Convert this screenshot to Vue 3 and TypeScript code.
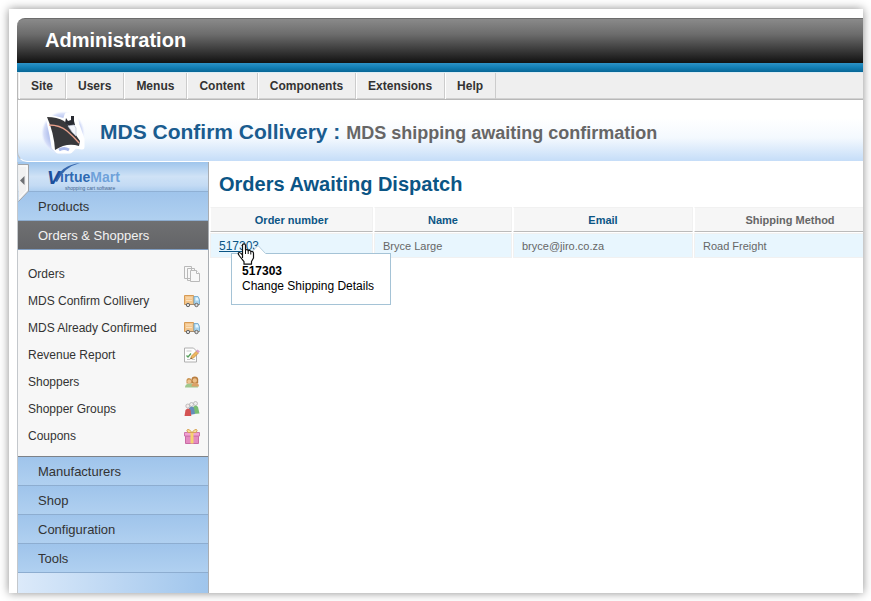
<script setup lang="ts">
interface ShopLink {
  label: string
  icon: 'pages' | 'truck' | 'report' | 'people' | 'groups' | 'gift'
}

interface Order {
  number: string
  name: string
  email: string
  method: string
}

const menu: string[] = ['Site', 'Users', 'Menus', 'Content', 'Components', 'Extensions', 'Help']

const links: ShopLink[] = [
  { label: 'Orders', icon: 'pages' },
  { label: 'MDS Confirm Collivery', icon: 'truck' },
  { label: 'MDS Already Confirmed', icon: 'truck' },
  { label: 'Revenue Report', icon: 'report' },
  { label: 'Shoppers', icon: 'people' },
  { label: 'Shopper Groups', icon: 'groups' },
  { label: 'Coupons', icon: 'gift' },
]

const sections: string[] = ['Manufacturers', 'Shop', 'Configuration', 'Tools']

const orders: Order[] = [
  { number: '517303', name: 'Bryce Large', email: 'bryce@jiro.co.za', method: 'Road Freight' },
]
</script>

<template>
  <div class="page">
    <div class="frame">
      <header class="brand">Administration</header>
      <div class="stripe"></div>
      <nav class="menu">
        <a v-for="item in menu" :key="item" href="#">{{ item }}</a>
      </nav>

      <div class="title-wrap">
        <div class="title">
          <svg class="ship" viewBox="0 0 48 48" width="48" height="48" aria-hidden="true">
            <defs>
              <radialGradient id="globe">
                <stop offset="0" stop-color="#93a5e0" />
                <stop offset="0.7" stop-color="#bcc8f0" />
                <stop offset="0.88" stop-color="#d6def8" />
                <stop offset="1" stop-color="#eef3ff" stop-opacity="0" />
              </radialGradient>
            </defs>
            <circle cx="23" cy="24" r="22" fill="url(#globe)" />
            <path d="M8 8 L25 12 L27 6 L35 6 L37 16 L42 30 L42 38 L35 37 L30 42 L18 42 L14 38 L12 26Z" fill="#fff" stroke="#fff" stroke-width="5" stroke-linejoin="round" />
            <path d="M19 41q5-3 10 0" stroke="#a9b8ea" stroke-width="3" fill="none" />
            <path d="M7 8 Q17 8 24 12 Q32 20 40 32 L39 37 Q27 33 15 41 Q14 24 7 8Z" fill="#38383b" />
            <path d="M26 9 28 12 31 11 31 7 34 7 34 12 35 16 29 17 25 14Z" fill="#292b32" />
            <path d="M28 17 34 16 36 19 36 27 32 23Z" fill="#f4f6fc" stroke="#b8bfce" stroke-width=".7" />
            <path d="M9 16 Q20 16 27 22 T39 34" stroke="#e8a08c" stroke-width="1.3" fill="none" />
          </svg>
          <h1>MDS Confirm Collivery : <small>MDS shipping awaiting confirmation</small></h1>
        </div>
      </div>

      <div class="body">
        <aside class="side">
          <button class="handle" type="button" aria-label="Toggle menu">
            <svg viewBox="0 0 11 38" width="11" height="38">
              <path d="M0 .5H10.500V27L.5 37.500" fill="#f1f1f1" stroke="#9fa3a8" />
              <path d="M1.500 2H9V26L1.500 34" fill="none" stroke="#fff" />
              <path d="M6.500 12 2 16.500 6.500 21Z" fill="#6e7074" />
            </svg>
          </button>
          <div class="logo">
            <svg viewBox="0 0 80 29" width="80" height="29" role="img" aria-label="VirtueMart shopping cart software">
              <path d="M9 19 Q15 3 34 1 Q18 5 11 20Z" fill="#3565ac" />
              <text x="1" y="22" class="logo-v">V</text>
              <text x="14" y="20" class="logo-word">irtue<tspan class="logo-mart">Mart</tspan></text>
              <text x="19" y="28" class="logo-tag">shopping cart software</text>
            </svg>
          </div>
          <a class="section" href="#">Products</a>
          <a class="section active" href="#">Orders &amp; Shoppers</a>
          <ul class="links">
            <li v-for="link in links" :key="link.label">
              <a href="#">
                <span>{{ link.label }}</span>
                <svg viewBox="0 0 16 16" width="16" height="16" aria-hidden="true">
                  <g v-if="link.icon === 'pages'" fill="#f8f8f8" stroke="#b9b9b9">
                    <path d="M.5.5h7v12h-7zM3.500 2.500h7v12h-7z" />
                    <path d="M6.500 4.500h6l3 3v8h-9z" />
                    <path d="M12.500 4.500v3h3" fill="#fff" />
                  </g>
                  <g v-else-if="link.icon === 'truck'">
                    <path d="M.5 2.500h9v9h-9z" fill="#f3c68d" stroke="#d79b55" />
                    <path d="M2 5h6M2 7.500h6" stroke="#fbe1bd" />
                    <path d="M10 3.500h4l1.500 3v5h-5.500z" fill="#a9d4ee" stroke="#7fb1d2" />
                    <path d="M11.500 4.500h2.200l.9 3h-3.100z" fill="#e6f6ff" />
                    <path d="M1 11.500h14.500" stroke="#a58b6c" />
                    <circle cx="4" cy="12" r="1.700" fill="#ddd" stroke="#666" />
                    <circle cx="12.500" cy="12" r="1.700" fill="#ddd" stroke="#666" />
                  </g>
                  <g v-else-if="link.icon === 'report'">
                    <path d="M.5 1h9l3 3v11h-12z" fill="#fdfdfd" stroke="#b0b0b0" />
                    <path d="M2.500 4h5M8 12.500h3M3 12.500h3" stroke="#c9c9c9" />
                    <path d="M2.500 8.500l1.500 1.500 3-3.500" fill="none" stroke="#57a05c" stroke-width="1.300" />
                    <path d="M6.500 12l1-3 5-5 2 2-5 5z" fill="#f0b75f" stroke="#bd8841" stroke-width=".7" />
                    <path d="M12 4l1.500-1.500 2.500 2L14 6z" fill="#d7a0c8" />
                    <path d="M6.500 12l.5-1.500 1 1z" fill="#444" />
                  </g>
                  <g v-else-if="link.icon === 'people'">
                    <path d="M1 13.500q0-3.500 4-4h5q4 .5 4 4z" fill="#9fc88e" />
                    <path d="M7.500 12.500q0-4 3.500-4.500 4 .5 4 4.500z" fill="#dba268" />
                    <path d="M2.500 9.500V6.500q0-2.500 2.500-2.500t2.800 2.500v3z" fill="#c9924f" />
                    <circle cx="5.200" cy="7.500" r="1.900" fill="#ecc592" />
                    <path d="M7.500 9V5.500q0-3 3.300-3t3.400 3V9z" fill="#b97e40" />
                    <circle cx="10.800" cy="6.500" r="2.200" fill="#ecc08a" />
                  </g>
                  <g v-else-if="link.icon === 'groups'">
                    <circle cx="11.500" cy="2.500" r="2" fill="#eee" stroke="#aaa" stroke-width=".7" />
                    <path d="M9 13V6q3-3 5 0l1.500 6.500z" fill="#78bd72" />
                    <circle cx="7.500" cy="3.500" r="2" fill="#eee" stroke="#aaa" stroke-width=".7" />
                    <path d="M5 14V7q3-3 5 0l1 6z" fill="#668dbb" />
                    <circle cx="3.800" cy="5" r="2" fill="#f3eaea" stroke="#aaa" stroke-width=".7" />
                    <path d="M.5 15 1.500 9q2.500-3 5 0l.8 6z" fill="#d45353" />
                  </g>
                  <g v-else>
                    <path d="M1.500 8h13v7.500h-13z" fill="#e48bc0" stroke="#c86ba3" />
                    <path d="M.5 4.500h15v3.500h-15z" fill="#f0a3d1" stroke="#cf75ac" />
                    <path d="M6.500 4.500h3v11h-3z" fill="#f5d36f" />
                    <path d="M8 4.500Q5 .5 3.500 1.500T4 4.500zM8 4.500q3-4 4.500-3T12 4.500z" fill="#f6e2a0" stroke="#d8a457" />
                  </g>
                </svg>
              </a>
            </li>
          </ul>
          <a v-for="section in sections" :key="section" class="section" href="#">{{ section }}</a>
          <div class="rest"></div>
        </aside>

        <main class="content">
          <h2>Orders Awaiting Dispatch</h2>
          <table>
            <colgroup>
              <col class="col-order" />
              <col class="col-name" />
              <col class="col-email" />
              <col />
            </colgroup>
            <thead>
              <tr>
                <th scope="col">Order number</th>
                <th scope="col">Name</th>
                <th scope="col">Email</th>
                <th scope="col" class="plain">Shipping Method</th>
              </tr>
            </thead>
            <tbody>
              <tr v-for="order in orders" :key="order.number">
                <td class="order">
                  <a href="#">{{ order.number }}</a>
                  <div class="tip" role="tooltip">
                    <svg class="tip-arrow" viewBox="0 0 16 9" width="16" height="9" aria-hidden="true">
                      <path d="M0 9 8 .5 16 9z" fill="#fff" />
                      <path d="M0 8.500 8 .5 15.500 8.500" fill="none" stroke="#b5cede" />
                    </svg>
                    <strong>{{ order.number }}</strong>
                    <span>Change Shipping Details</span>
                  </div>
                  <svg class="pointer" viewBox="0 0 18 22" width="18" height="22" aria-hidden="true">
                    <path d="M5.500 14.500V2.500q0-1.700 1.500-1.700t1.500 1.700V7q2-1 2.700.7 2-.8 2.600.8 2.700-.7 2.700 2V15l-2 3.500v2.700H7v-2.500L2.500 13q-2-2.500-.8-3.300T5.500 12z" fill="#fff" stroke="#111" stroke-width="1.200" stroke-linejoin="round" />
                    <path d="M8.500 7v4M11.200 8v3M13.800 9v2.500" stroke="#111" fill="none" />
                  </svg>
                </td>
                <td>{{ order.name }}</td>
                <td>{{ order.email }}</td>
                <td>{{ order.method }}</td>
              </tr>
            </tbody>
          </table>
        </main>
      </div>
    </div>
  </div>
</template>

<style>
body {
  margin: 0;
  background: #fff;
}
</style>

<style scoped>
* {
  box-sizing: border-box;
}

.page {
  display: flex;
  min-height: 100vh;
  padding: 9px 8px 8px 9px;
  font-family: "Liberation Sans", Arial, sans-serif;
  color: #333;
}

a {
  color: inherit;
  text-decoration: none;
}

.frame {
  flex: 1;
  min-width: 0;
  display: flex;
  flex-direction: column;
  padding: 9px 0 0 8px;
  background: #fff;
  box-shadow: 0 0 9px rgba(0, 0, 0, 0.45);
}

.brand {
  height: 45px;
  padding-left: 28px;
  border-top: 1px solid #6c6c6c;
  border-top-left-radius: 8px;
  background: linear-gradient(#8a8a8a, #6c6c6c 35%, #141414 98%);
  color: #fff;
  font-size: 20px;
  font-weight: bold;
  line-height: 43px;
}

.stripe {
  height: 9px;
  background: linear-gradient(#2d92c6, #1480b6 45%, #076696);
}

.menu {
  display: flex;
  height: 28px;
  padding-left: 1px;
  border: solid #b8b8b8;
  border-width: 1px 0 1px 1px;
  border-top-color: #dcecf4;
  background: #efefef;
  box-shadow: inset 0 -1px #d2d2d2;
}

.menu a {
  padding: 0 12px;
  border-right: 1px solid #ccc;
  box-shadow: inset 1px 0 #fff;
  font-size: 12px;
  font-weight: bold;
  line-height: 27px;
}

.title-wrap {
  background: #b7d3f1;
}

.title {
  display: flex;
  align-items: center;
  height: 62px;
  padding: 4px 0 0 22px;
  border: solid #fff;
  border-width: 0 0 1px 1px;
  border-left-color: #c0c0c0;
  border-bottom-left-radius: 10px;
  background: linear-gradient(#fff 30%, #f4f9fe 62%, #c5ddf8);
}

.ship {
  flex: none;
}

h1 {
  margin: 0 0 0 12px;
  color: #1a5c8f;
  font-size: 21px;
  line-height: 28px;
  white-space: nowrap;
}

h1 small {
  color: #666;
  font-size: 18px;
}

.body {
  flex: 1;
  display: flex;
}

.side {
  position: relative;
  flex: none;
  display: flex;
  flex-direction: column;
  width: 192px;
  border: solid #a9adb2;
  border-width: 0 1px;
  border-left-color: #c4c8cc;
  background: #f7f7f7;
}

.handle {
  position: absolute;
  top: 2px;
  left: 0;
  display: flex;
  padding: 0;
  border: 0;
  background: none;
}

.logo {
  height: 30px;
  padding-left: 28px;
  border-bottom: 1px solid #8fb0d4;
  background: linear-gradient(#9fc5ec, #cfe2f6 50%, #c4dbf4 80%, #afcff0);
}

.logo svg {
  display: block;
}

.logo-v {
  font-size: 19px;
  font-weight: bold;
  font-style: italic;
  fill: #1c4f9b;
}

.logo-word {
  font-size: 14px;
  font-weight: bold;
  fill: #2f69b2;
}

.logo-mart {
  fill: #6fa2da;
}

.logo-tag {
  font-size: 5px;
  fill: #45668f;
}

.section {
  height: 29px;
  padding-left: 20px;
  border-bottom: 1px solid #8dadd0;
  background: linear-gradient(#9fc4eb, #b0d0f0);
  font-size: 13px;
  line-height: 29px;
}

.section.active {
  border-bottom: 1px solid #7f9cc0;
  background: linear-gradient(#6f7072, #636467);
  color: #f2f2f2;
}

.links {
  margin: 0;
  padding: 10px 0 7px;
  border-bottom: 1px solid #7d8288;
  list-style: none;
}

.links a {
  display: flex;
  align-items: center;
  justify-content: space-between;
  height: 27px;
  padding: 0 8px 0 10px;
  font-size: 12px;
}

.rest {
  flex: 1;
  min-height: 20px;
  background: linear-gradient(90deg, #dceafa, #9fc5ec);
}

.content {
  flex: 1;
  min-width: 0;
  overflow: hidden;
}

h2 {
  margin: 0;
  padding: 8px 10px;
  color: #0b5585;
  font-size: 20px;
  line-height: 28px;
}

table {
  width: calc(100% + 24px);
  table-layout: fixed;
  border-collapse: separate;
  border-spacing: 1px;
}

.col-order {
  width: 163px;
}

.col-name {
  width: 138px;
}

.col-email {
  width: 180px;
}

th,
td {
  padding: 0 8px;
  border: 1px solid #f1f1f1;
  font-size: 11px;
}

th {
  height: 25px;
  border-bottom: 1px solid #bbb;
  border-left-color: #fff;
  background: #f6f6f6;
  color: #0b5585;
}

th.plain {
  color: #666;
}

td {
  height: 25px;
  background: #e8f6fe;
  color: #666;
}

.order {
  position: relative;
}

.order a {
  color: #0b5585;
  font-size: 12px;
  text-decoration: underline;
}

.tip {
  position: absolute;
  top: 19px;
  left: 20px;
  display: flex;
  flex-direction: column;
  min-width: 160px;
  padding: 10px;
  border: 1px solid #a5c3d6;
  background: #fff;
  color: #000;
  font-size: 12px;
  line-height: 15px;
  white-space: nowrap;
}

.tip-arrow {
  position: absolute;
  top: -9px;
  left: 18px;
}

.pointer {
  position: absolute;
  top: 9px;
  left: 26px;
}
</style>
